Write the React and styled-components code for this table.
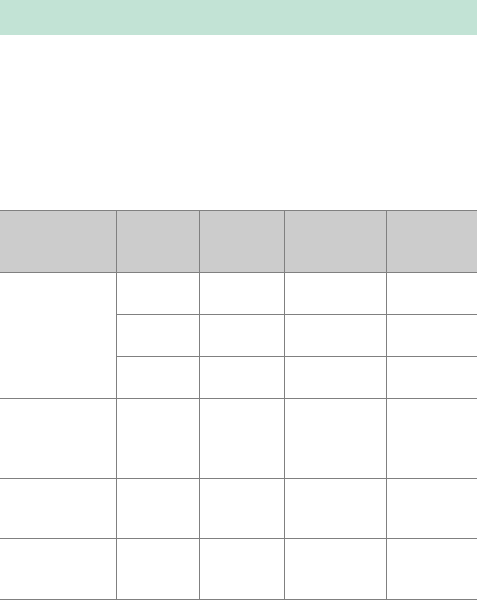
import React from "react";
import styled, { createGlobalStyle } from "styled-components";

const Global = createGlobalStyle`
  html, body { margin: 0; padding: 0; background: #ffffff; }
  body { font-family: "Liberation Sans", Arial, sans-serif; }
`;

const TopBar = styled.header`
  height: 35px;
  background: #c2e3d5;
`;

const Intro = styled.section`
  height: 175px;
`;

const Table = styled.div`
  display: grid;
  grid-template-columns: 116px 82px 84px 101px 90px;
  grid-template-rows: 61px 41px 41px 41px 79px 59px 60px;
  gap: 1px;
  background: #808080;
  border-top: 1px solid #808080;
  border-bottom: 1px solid #808080;
  width: 477px;
`;

const HeadCell = styled.div`
  background: #cccccc;
`;

const Cell = styled.div`
  background: #ffffff;
  grid-row: ${(p) => (p.$span ? `span ${p.$span}` : "auto")};
`;

const rows = [
  { first: 3, count: 3 },
  { first: 1, count: 1 },
  { first: 1, count: 1 },
  { first: 1, count: 1 },
];

export default function App() {
  return (
    <>
      <Global />
      <TopBar />
      <Intro />
      <Table>
        {Array.from({ length: 5 }).map((_, i) => (
          <HeadCell key={`h${i}`} />
        ))}
        {/* group with rowspan */}
        <Cell $span={3} />
        {Array.from({ length: 4 }).map((_, i) => (
          <Cell key={`a${i}`} />
        ))}
        {Array.from({ length: 4 }).map((_, i) => (
          <Cell key={`b${i}`} />
        ))}
        {Array.from({ length: 4 }).map((_, i) => (
          <Cell key={`c${i}`} />
        ))}
        {[0, 1, 2].map((r) =>
          Array.from({ length: 5 }).map((_, i) => <Cell key={`r${r}-${i}`} />)
        )}
      </Table>
    </>
  );
}
